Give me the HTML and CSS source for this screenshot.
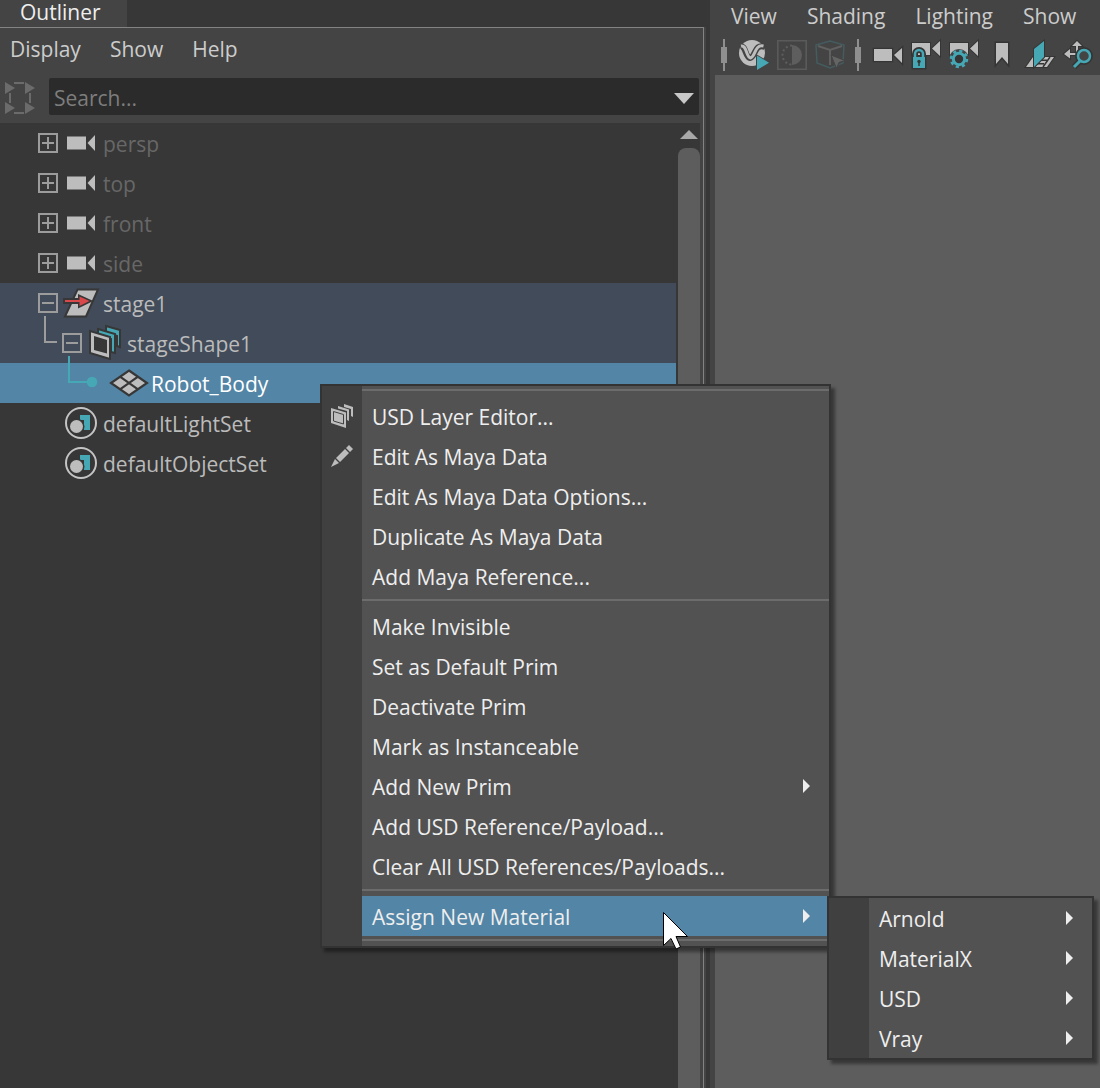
FILE: index.html
```html
<!DOCTYPE html>
<html lang="en">
<head>
  <meta charset="UTF-8">
  <meta name="viewport" content="width=device-width, initial-scale=1.0">
  <title>Outliner</title>
  <link rel="stylesheet" href="styles.css">
</head>
<body>
  <!-- shared icons -->
  <svg class="defs" width="0" height="0" aria-hidden="true">
    <symbol id="camera" viewBox="0 0 30 30">
      <path d="M1 8.500h19v13H1zM21.500 15l7.500-8v16z" fill="#bdbdbd"/>
    </symbol>
    <symbol id="plus" viewBox="0 0 20 20">
      <path d="M1 1h18v18H1zM4 10h12M10 4v12" fill="none" stroke="#9c9c9c" stroke-width="2"/>
    </symbol>
    <symbol id="minus" viewBox="0 0 20 20">
      <path d="M1 1h18v18H1zM4 10h12" fill="none" stroke="#9c9c9c" stroke-width="2"/>
    </symbol>
    <symbol id="set" viewBox="0 0 32 32">
      <circle cx="16" cy="16" r="15" fill="#373737" stroke="#c4c4c4" stroke-width="2"/>
      <path d="M15 8h10v15h-6V13h-4z" fill="#46a8b5"/>
      <circle cx="11.500" cy="19.500" r="8" fill="#373737"/>
      <circle cx="11.500" cy="19.500" r="6.500" fill="#bdbdbd"/>
    </symbol>
  </svg>

  <main class="app">
    <section class="dock">
      <div class="tabs"><button class="tab">Outliner</button></div>
      <div class="outliner">
        <nav class="menubar">
          <button>Display</button>
          <button>Show</button>
          <button>Help</button>
        </nav>
        <div class="search-row">
          <button class="filter" aria-label="Filter">
            <svg width="32" height="32" viewBox="0 0 32 32">
              <path d="M9 1h10M9 31h10M5 11v10M25 11v10" stroke="#6b6b6b" stroke-width="2"/>
              <path d="M0 0l10 6-10 6zM20 0l10 6-10 6zM0 20l10 6-10 6zM20 20l10 6-10 6z" fill="#6b6b6b"/>
            </svg>
          </button>
          <div class="search">
            <input type="text" placeholder="Search..." aria-label="Search">
            <button aria-label="Search history">
              <svg width="20" height="11" viewBox="0 0 20 11"><path d="M0 0h20L10 11z" fill="#c8c8c8"/></svg>
            </button>
          </div>
        </div>
        <div class="list">
          <ul class="tree">
            <li class="row dim">
              <button class="toggle" aria-label="Expand persp"><svg><use href="#plus"/></svg></button>
              <span class="icon"><svg width="30" height="30"><use href="#camera"/></svg></span>
              <span class="label">persp</span>
            </li>
            <li class="row dim">
              <button class="toggle" aria-label="Expand top"><svg><use href="#plus"/></svg></button>
              <span class="icon"><svg width="30" height="30"><use href="#camera"/></svg></span>
              <span class="label">top</span>
            </li>
            <li class="row dim">
              <button class="toggle" aria-label="Expand front"><svg><use href="#plus"/></svg></button>
              <span class="icon"><svg width="30" height="30"><use href="#camera"/></svg></span>
              <span class="label">front</span>
            </li>
            <li class="row dim">
              <button class="toggle" aria-label="Expand side"><svg><use href="#plus"/></svg></button>
              <span class="icon"><svg width="30" height="30"><use href="#camera"/></svg></span>
              <span class="label">side</span>
            </li>
            <li class="row parent">
              <button class="toggle" aria-label="Collapse stage1"><svg><use href="#minus"/></svg></button>
              <span class="icon">
                <svg width="38" height="32" viewBox="0 0 38 32">
                  <path d="M15.500 2.500H36L24 29.500H3z" fill="#bdbdbd" stroke="#373737" stroke-width="2"/>
                  <path d="M2 12h15V8.500L29 14l-12 6v-4H2z" fill="#373737" stroke="#373737" stroke-width="2"/>
                  <path d="M3 13h14.500V9.500L27.500 14l-10 5v-4H3z" fill="#d9484a"/>
                </svg>
              </span>
              <span class="label">stage1</span>
            </li>
            <li class="row parent">
              <span class="branch">
                <svg width="24" height="40" viewBox="0 0 24 40"><path d="M7-7v26h12" fill="none" stroke="#9c9c9c" stroke-width="2"/></svg>
              </span>
              <button class="toggle" aria-label="Collapse stageShape1"><svg><use href="#minus"/></svg></button>
              <span class="icon">
                <svg width="38" height="36" viewBox="0 0 38 36">
                  <path d="M20 1l14 4v17l-3-1V11L20 7z" fill="#46a8b5" stroke="#373737" stroke-width="2"/>
                  <path d="M12 4l17 5v19l-4-1V14l-13-4z" fill="#46a8b5" stroke="#373737" stroke-width="2"/>
                  <path d="M4 6l20 6v22L4 28z" fill="#bdbdbd" stroke="#373737" stroke-width="2"/>
                  <path d="M8 11l13 4v13.500L8 25z" fill="#373737"/>
                </svg>
              </span>
              <span class="label">stageShape1</span>
            </li>
            <li class="row selected">
              <span class="branch"></span>
              <span class="branch wide">
                <svg width="48" height="40" viewBox="0 0 48 40">
                  <path d="M7-7v26h22" fill="none" stroke="#46a8b5" stroke-width="2"/>
                  <circle cx="30" cy="19" r="5.300" fill="#46a8b5"/>
                </svg>
              </span>
              <span class="icon">
                <svg width="38" height="28" viewBox="0 0 38 28">
                  <path d="M19 1.500L37 14 19 26.500 1 14zM10 7.700l18 12.600M28 7.700L10 20.300" fill="#bdbdbd" stroke="#373737" stroke-width="2.200"/>
                </svg>
              </span>
              <span class="label">Robot_Body</span>
            </li>
            <li class="row">
              <span class="branch"></span>
              <span class="icon"><svg width="32" height="32"><use href="#set"/></svg></span>
              <span class="label">defaultLightSet</span>
            </li>
            <li class="row">
              <span class="branch"></span>
              <span class="icon"><svg width="32" height="32"><use href="#set"/></svg></span>
              <span class="label">defaultObjectSet</span>
            </li>
          </ul>
          <div class="scrollbar">
            <button aria-label="Scroll up"><svg width="18" height="9" viewBox="0 0 18 9"><path d="M9 0l9 9H0z" fill="#a8a8a8"/></svg></button>
            <div class="thumb"></div>
          </div>
        </div>
      </div>
    </section>

    <section class="viewport">
      <nav class="menubar">
        <button>View</button>
        <button>Shading</button>
        <button>Lighting</button>
        <button>Show</button>
      </nav>
      <div class="toolbar">
        <span class="handle"></span>
        <button aria-label="V-Ray render">
          <svg viewBox="0 0 30 30">
            <circle cx="13" cy="13" r="13" fill="#bdbdbd"/>
            <path d="M1 6c6-1 5 11 10 12 6-1 4-15 15-11" fill="none" stroke="#444" stroke-width="6"/>
            <path d="M2 6c6-1 5 11 9.500 12 5-1 4-14 13-12" fill="none" stroke="#bdbdbd" stroke-width="3"/>
            <path d="M17 14l15 9-15 9z" fill="#444"/>
            <path d="M18 15.500l12 7.200L18 30z" fill="#46a8b5"/>
          </svg>
        </button>
        <button aria-label="Exposure">
          <svg viewBox="0 0 30 30">
            <path d="M.8.800h28.400v28.400H.8z" fill="none" stroke="#5a5a5a" stroke-width="1.600"/>
            <path d="M15 5a10 10 0 0 1 0 20z" fill="#5e5e5e"/>
            <path d="M15 5.500a9.500 9.500 0 0 0 0 19" fill="none" stroke="#5e5e5e" stroke-width="2" stroke-dasharray="2 2.500"/>
          </svg>
        </button>
        <button aria-label="Select object">
          <svg viewBox="0 0 30 30">
            <path d="M1 5l14-4 14 4-1 18-13 5L2 23z" fill="none" stroke="#445c5f" stroke-width="1.500"/>
            <path d="M3 6l12 4 12-4M15 10v15" fill="none" stroke="#606060" stroke-width="2"/>
            <path d="M16 15l14 5.500-6 2-2.500 6z" fill="#646464" stroke="#444"/>
          </svg>
        </button>
        <span class="handle"></span>
        <button aria-label="Camera">
          <svg viewBox="0 0 30 30">
            <path d="M1 9h18v12H1zM21 15l8-7v15z" fill="#bdbdbd" stroke="#353535" stroke-width="2.500" paint-order="stroke"/>
          </svg>
        </button>
        <button aria-label="Lock camera">
          <svg viewBox="0 0 30 30">
            <path d="M1 3h18v12H1zM21 8.500L29 1v15z" fill="#bdbdbd" stroke="#353535" stroke-width="2" paint-order="stroke"/>
            <path d="M4 18v-4a4 4 0 0 1 8 0v4" fill="none" stroke="#353535" stroke-width="6"/>
            <path d="M2 17h12v11H2z" fill="#46a8b5" stroke="#353535" stroke-width="3" paint-order="stroke"/>
            <path d="M4 18v-4a4 4 0 0 1 8 0v4" fill="none" stroke="#46a8b5" stroke-width="2.500"/>
            <circle cx="8" cy="21.500" r="1.700" fill="#353535"/><path d="M8 21v5" stroke="#353535" stroke-width="1.500"/>
          </svg>
        </button>
        <button aria-label="Camera settings">
          <svg viewBox="0 0 30 30">
            <path d="M1 3h18v12H1zM21 8.500L29 1v15z" fill="#bdbdbd" stroke="#353535" stroke-width="2" paint-order="stroke"/>
            <circle cx="10" cy="19" r="10" fill="#444"/>
            <circle cx="10" cy="19" r="8" fill="none" stroke="#46a8b5" stroke-width="2.500" stroke-dasharray="3.200 3.080"/>
            <circle cx="10" cy="19" r="5.700" fill="#353535" stroke="#46a8b5" stroke-width="3"/>
          </svg>
        </button>
        <button aria-label="Bookmarks">
          <svg viewBox="0 0 30 30">
            <path d="M9 3h12v21l-6-7-6 7z" fill="#bdbdbd" stroke="#353535" stroke-width="3" paint-order="stroke"/>
          </svg>
        </button>
        <button aria-label="Image plane">
          <svg viewBox="0 0 30 30">
            <path d="M8 17h21l-7 10H1z" fill="#bdbdbd" stroke="#353535" stroke-width="2" paint-order="stroke"/>
            <path d="M10 20.300h12M8 23.700h11M25 17l-7 10" stroke="#353535" stroke-width="1.500"/>
            <path d="M9 9l10-8v16L9 27z" fill="#46a8b5" stroke="#353535" stroke-width="2" paint-order="stroke"/>
          </svg>
        </button>
        <button aria-label="Pan and zoom">
          <svg viewBox="0 0 30 30">
            <path d="M14 1l5 5h-4v9H7v3.500L1 14l6-5v4h6V6H9z" fill="#bdbdbd" stroke="#353535" stroke-width="2" paint-order="stroke"/>
            <path d="M17 21l-6 6" stroke="#353535" stroke-width="6"/>
            <circle cx="21" cy="16" r="6" fill="#444" stroke="#353535" stroke-width="6"/>
            <path d="M17 21l-6 6" stroke="#46a8b5" stroke-width="3"/>
            <circle cx="21" cy="16" r="6" fill="#444" stroke="#46a8b5" stroke-width="2.500"/>
          </svg>
        </button>
      </div>
      <div class="canvas"></div>
    </section>
  </main>

  <ul class="menu context-menu">
    <li class="separator"></li>
    <li class="item">
      <span class="gutter">
        <svg width="22" height="24" viewBox="0 0 22 24">
          <path d="M13 0l9 3v10l-2-1V5l-7-2zM7 2l11 3.500V17l-2-1V7L7 4.500z" fill="#bdbdbd"/>
          <path d="M0 4l15 4.500V24L0 19z" fill="#bdbdbd"/>
          <path d="M2.500 7.500l10 3v9.500l-10-3z" fill="none" stroke="#404040"/>
        </svg>
      </span>
      <button>USD Layer Editor...</button>
    </li>
    <li class="item">
      <span class="gutter">
        <svg width="22" height="22" viewBox="0 0 22 22">
          <path d="M18 0l4 4-3 3-4-4zM14 4l4 4-9 9-4-4zM4 14l4 4-8 4z" fill="#bdbdbd"/>
        </svg>
      </span>
      <button>Edit As Maya Data</button>
    </li>
    <li class="item"><span class="gutter"></span><button>Edit As Maya Data Options...</button></li>
    <li class="item"><span class="gutter"></span><button>Duplicate As Maya Data</button></li>
    <li class="item"><span class="gutter"></span><button>Add Maya Reference...</button></li>
    <li class="separator"></li>
    <li class="item"><span class="gutter"></span><button>Make Invisible</button></li>
    <li class="item"><span class="gutter"></span><button>Set as Default Prim</button></li>
    <li class="item"><span class="gutter"></span><button>Deactivate Prim</button></li>
    <li class="item"><span class="gutter"></span><button>Mark as Instanceable</button></li>
    <li class="item"><span class="gutter"></span><button class="has-sub">Add New Prim</button></li>
    <li class="item"><span class="gutter"></span><button>Add USD Reference/Payload...</button></li>
    <li class="item"><span class="gutter"></span><button>Clear All USD References/Payloads...</button></li>
    <li class="separator"></li>
    <li class="item active">
      <span class="gutter"></span><button class="has-sub">Assign New Material</button>
      <ul class="menu submenu">
        <li class="item"><span class="gutter"></span><button class="has-sub">Arnold</button></li>
        <li class="item"><span class="gutter"></span><button class="has-sub">MaterialX</button></li>
        <li class="item"><span class="gutter"></span><button class="has-sub">USD</button></li>
        <li class="item"><span class="gutter"></span><button class="has-sub">Vray</button></li>
      </ul>
    </li>
    <li class="separator"></li>
  </ul>

  <svg class="cursor" width="26" height="38" viewBox="0 0 26 38" aria-hidden="true">
    <path d="M.5.500v33l7.500-7 5 10.500 4.500-2-4.500-10.500h11.500z" fill="#fff" stroke="#000"/>
  </svg>
</body>
</html>
```

FILE: styles.css
```css
* {
  box-sizing: border-box;
}
body {
  margin: 0;
  font-family: "Segoe UI", "Open Sans", sans-serif;
  font-size: 21px;
  line-height: 30px;
  color: #bbb;
  background-color: #373737;
  overflow: hidden;
}
button, input {
  font: inherit;
  color: inherit;
  background: none;
  border: 0;
  padding: 0;
  margin: 0;
}
ul {
  list-style: none;
  margin: 0;
  padding: 0;
}
svg {
  display: block;
  overflow: visible;
}
.defs {
  position: absolute;
}
.app {
  display: grid;
  grid-template-columns: 71fr 39fr;
  height: 100vh;
}

/* outliner */
.dock {
  display: flex;
  flex-direction: column;
  min-width: 0;
  padding-right: 6px;
}
.tabs {
  display: flex;
  height: 27px;
}
.tab {
  padding: 0 26px 3px 20px;
  line-height: 24px;
  color: #eee;
  background-color: #444;
}
.outliner {
  flex: 1;
  display: flex;
  flex-direction: column;
  min-height: 0;
  padding-right: 3px;
  background-color: #444;
  border-top: 1px solid #838383;
  border-right: 1px solid #838383;
  box-shadow: 2px 0 0 #444;
}
.menubar {
  display: flex;
  gap: 29px;
  color: #ccc;
}
.outliner .menubar {
  padding: 6px 10px 14px;
}
.search-row {
  display: flex;
  align-items: center;
  gap: 12px;
  padding: 0 1px 8px 5px;
}
.filter {
  width: 32px;
  padding-top: 3px;
}
.search {
  flex: 1;
  display: flex;
  align-items: center;
  height: 37px;
  padding: 3px 5px 0;
  background-color: #2b2b2b;
  border-radius: 2px;
}
.search input {
  flex: 1;
  min-width: 0;
  outline: none;
}
.search input::placeholder {
  color: #7d7d7d;
}
.list {
  flex: 1;
  display: flex;
  min-height: 0;
  background-color: #373737;
}
.tree {
  flex: 1;
}
.row {
  display: flex;
  align-items: center;
  height: 40px;
  padding-left: 38px;
}
.row.dim {
  color: #676767;
}
.row.parent {
  background-color: #414b59;
}
.row.selected {
  color: #fff;
  background-color: #5285a6;
}
.toggle, .branch {
  width: 24px;
}
.branch.wide {
  width: 48px;
}
.toggle svg {
  width: 20px;
  height: 20px;
}
.icon {
  display: flex;
  justify-content: center;
  width: 38px;
}
.label {
  padding: 2px 0 0 3px;
}
.scrollbar {
  display: flex;
  flex-direction: column;
  width: 24px;
  padding: 7px 0 0 2px;
}
.scrollbar button {
  display: flex;
  justify-content: center;
  height: 18px;
}
.thumb {
  flex: 1;
  background-color: #5d5d5d;
  border-radius: 8px 8px 0 0;
}

/* viewport panel */
.viewport {
  display: flex;
  flex-direction: column;
  min-width: 0;
  padding-left: 5px;
  background-color: #444;
}
.viewport .menubar {
  gap: 30px;
  padding: 1px 16px 4px;
}
.toolbar {
  display: flex;
  align-items: center;
  gap: 8px;
  height: 40px;
  padding-left: 4px;
}
.toolbar svg {
  width: 30px;
  height: 30px;
}
.handle {
  width: 6px;
  height: 32px;
  margin: 0 4px 0 2px;
  background:
    linear-gradient(#8f8f8f, #8f8f8f) center / 6px 16px no-repeat,
    linear-gradient(#8f8f8f, #8f8f8f) center / 2px 32px no-repeat;
}
.canvas {
  flex: 1;
  background-color: #5d5d5d;
}

/* menus */
.menu {
  position: absolute;
  color: #eee;
  background: linear-gradient(90deg, #404040 40px, #525252 40px);
  border: 2px solid #333;
  box-shadow: 4px 4px 3px rgba(0, 0, 0, 0.4);
}
.context-menu {
  top: 384px;
  left: 320px;
  min-width: 511px;
}
.submenu {
  top: 0;
  left: calc(100% - 2px);
  min-width: 267px;
}
.separator {
  height: 2px;
  margin: 3px 0 5px 40px;
  background-color: #6c6c6c;
}
.item {
  position: relative;
  display: flex;
  height: 40px;
}
.gutter {
  display: flex;
  align-items: center;
  justify-content: center;
  width: 40px;
}
.item > button {
  flex: 1;
  display: flex;
  align-items: center;
  justify-content: space-between;
  padding: 2px 19px 0 10px;
}
.item.active > button {
  background-color: #5285a6;
}
.has-sub::after {
  content: "";
  margin-bottom: 2px;
  border: 7px solid transparent;
  border-left-color: currentColor;
  border-right: 0;
}
.cursor {
  position: absolute;
  top: 912px;
  left: 663px;
}
```
